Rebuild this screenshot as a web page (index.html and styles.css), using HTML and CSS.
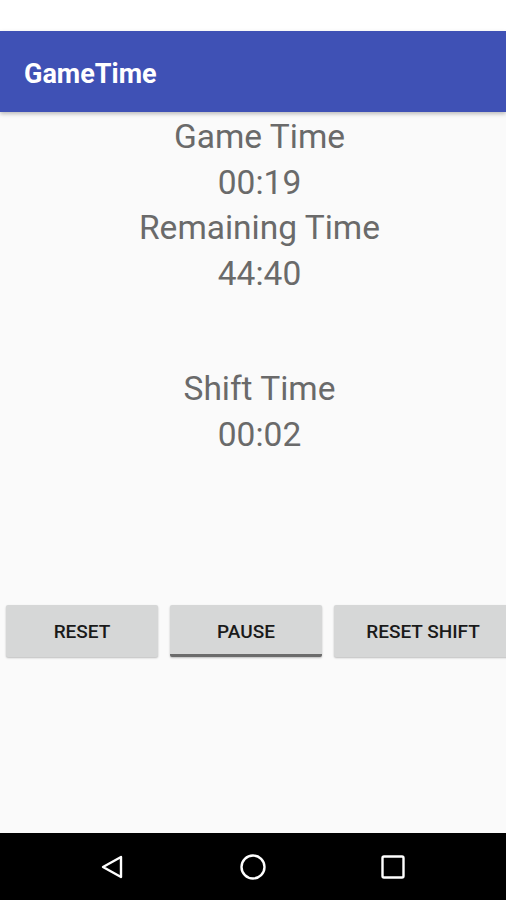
FILE: index.html
```html
<!DOCTYPE html>
<html>
<head>
<meta charset="utf-8">
<link rel="stylesheet" href="styles.css">
</head>
<body>
<div class="screen">
  <div class="status-bar"></div>
  <header class="app-bar"><span class="app-title">GameTime</span></header>
  <main class="content">
    <div class="timers">
      <div class="line">Game Time</div>
      <div class="line">00:19</div>
      <div class="line">Remaining Time</div>
      <div class="line">44:40</div>
    </div>
    <div class="timers shift">
      <div class="line">Shift Time</div>
      <div class="line">00:02</div>
    </div>
    <div class="buttons">
      <div class="btn">RESET</div>
      <div class="btn focused">PAUSE</div>
      <div class="btn wide">RESET SHIFT</div>
    </div>
  </main>
  <nav class="nav-bar">
    <svg class="nav-icon" width="28" height="28" viewBox="0 0 28 28"><path d="M22 4 L4 14 L22 24 Z" fill="none" stroke="#fff" stroke-width="2.4" stroke-linejoin="round"/></svg>
    <svg class="nav-icon" width="28" height="28" viewBox="0 0 28 28"><circle cx="14" cy="14" r="11.5" fill="none" stroke="#fff" stroke-width="2.4"/></svg>
    <svg class="nav-icon" width="28" height="28" viewBox="0 0 28 28"><rect x="3.5" y="3.5" width="21" height="21" rx="1.5" fill="none" stroke="#fff" stroke-width="2.4"/></svg>
  </nav>
</div>
</body>
</html>
```
FILE: styles.css
```css
html, body {
  margin: 0;
  padding: 0;
}
body {
  font-family: Roboto, "Noto Sans", sans-serif;
  background: #fafafa;
}
.screen {
  width: 506px;
  height: 900px;
  display: flex;
  flex-direction: column;
  overflow: hidden;
}
.status-bar {
  height: 31px;
  background: #ffffff;
  flex: none;
}
.app-bar {
  height: 81px;
  flex: none;
  background: #3f51b5;
  display: flex;
  align-items: center;
  padding-left: 24px;
  box-shadow: 0 2px 4px rgba(0,0,0,0.25);
  position: relative;
  z-index: 1;
}
.app-title {
  color: #ffffff;
  font-size: 27px;
  font-weight: 700;
  margin-top: 4px;
}
.content {
  flex: 1;
  background: #fafafa;
  display: flex;
  flex-direction: column;
}
.timers {
  padding-top: 2px;
  padding-left: 13px;
  text-align: center;
  color: #6a6a6a;
  font-size: 33.5px;
  line-height: 45.5px;
}
.timers.shift {
  padding-top: 70px;
}
.buttons {
  margin-top: 148px;
  display: flex;
  gap: 12px;
  padding-left: 6px;
}
.btn {
  flex: none;
  width: 152px;
  height: 52px;
  background: #d6d7d7;
  border-radius: 2px;
  box-shadow: 0 1px 2px rgba(0,0,0,0.25);
  display: flex;
  align-items: center;
  justify-content: center;
  font-size: 19px;
  font-weight: 500;
  color: #1a1a1a;
  box-sizing: border-box;
}
.btn.wide {
  width: 178px;
}
.btn.focused {
  border-bottom: 3px solid #6b6b6b;
  padding-top: 3px;
}
.nav-bar {
  height: 67px;
  flex: none;
  background: #000000;
  display: flex;
  align-items: center;
  justify-content: center;
  gap: 112px;
}
```
